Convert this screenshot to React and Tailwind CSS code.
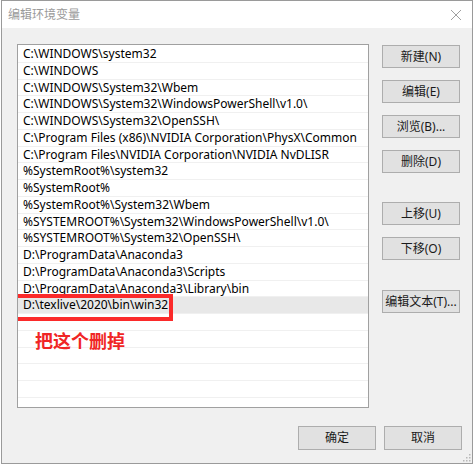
import React from "react";

const paths = [
  "C:\\WINDOWS\\system32",
  "C:\\WINDOWS",
  "C:\\WINDOWS\\System32\\Wbem",
  "C:\\WINDOWS\\System32\\WindowsPowerShell\\v1.0\\",
  "C:\\WINDOWS\\System32\\OpenSSH\\",
  "C:\\Program Files (x86)\\NVIDIA Corporation\\PhysX\\Common",
  "C:\\Program Files\\NVIDIA Corporation\\NVIDIA NvDLISR",
  "%SystemRoot%\\system32",
  "%SystemRoot%",
  "%SystemRoot%\\System32\\Wbem",
  "%SYSTEMROOT%\\System32\\WindowsPowerShell\\v1.0\\",
  "%SYSTEMROOT%\\System32\\OpenSSH\\",
  "D:\\ProgramData\\Anaconda3",
  "D:\\ProgramData\\Anaconda3\\Scripts",
  "D:\\ProgramData\\Anaconda3\\Library\\bin",
  "D:\\texlive\\2020\\bin\\win32",
  "",
  "",
  "",
  "",
  "",
];

const font = { fontFamily: "'Noto Sans', 'Noto Sans CJK SC', sans-serif" };

const Btn = ({ children, className = "" }) => (
  <button
    className={`w-[78px] h-[23px] bg-[#e1e1e1] border border-[#adadad] text-[12px] leading-none text-[#1a1a1a] ${className}`}
    style={font}
  >
    {children}
  </button>
);

export default function App() {
  return (
    <div className="w-[474px] h-[465px] bg-white pl-px" style={font}>
      <div className="w-[472px] h-[464px] border border-[#9a9a9a] bg-[#f0f0f0] flex flex-col relative">
        {/* Title bar */}
        <div className="h-[27px] bg-white flex items-center justify-between pl-[6px] pr-[8px]">
          <span className="text-[12px] text-[#9a9a9a]">编辑环境变量</span>
          <svg width="12" height="12" viewBox="0 0 12 12" className="mr-[2px]">
            <path d="M1 1 L11 11 M11 1 L1 11" stroke="#a0a0a0" strokeWidth="1" />
          </svg>
        </div>

        {/* Body */}
        <div className="flex pt-[16px] pl-[15px]">
          {/* List */}
          <div className="relative w-[352px] h-[364px] bg-white border border-[#a0a0a0] pt-px overflow-hidden">
            {paths.map((p, i) => (
              <div
                key={i}
                className={`h-[16.75px] border-b border-[#f0f0f0] pl-[5px] text-[12px] leading-[16px] text-black whitespace-nowrap ${
                  i === 15 ? "bg-[#e8e8e8]" : ""
                }`}
              >
                {p}
              </div>
            ))}
            {/* annotation */}
            <div className="absolute left-[-5px] top-[249px] w-[160px] h-[27px] border-4 border-[#fb2a2a]" />
            <div
              className="absolute left-[17px] top-[286px] text-[18px] leading-none font-bold text-[#f02525]"
              style={{ fontFamily: "'Noto Sans CJK SC', sans-serif" }}
            >
              把这个删掉
            </div>
          </div>

          {/* Side buttons */}
          <div className="flex flex-col ml-[13px] pt-px">
            <Btn>新建(N)</Btn>
            <Btn className="mt-[12px]">编辑(E)</Btn>
            <Btn className="mt-[12px]">浏览(B)...</Btn>
            <Btn className="mt-[12px]">删除(D)</Btn>
            <Btn className="mt-[29px]">上移(U)</Btn>
            <Btn className="mt-[12px]">下移(O)</Btn>
            <Btn className="mt-[30px]">编辑文本(T)...</Btn>
          </div>
        </div>

        {/* Bottom buttons */}
        <div className="flex justify-end gap-[8px] pr-[10px] mt-[18px]">
          <Btn className="h-[24px]">确定</Btn>
          <Btn className="h-[24px]">取消</Btn>
        </div>

        {/* resize grip */}
        <svg width="10" height="10" viewBox="0 0 10 10" className="absolute right-[1px] bottom-[1px]">
          {[[8, 2], [8, 5], [5, 5], [8, 8], [5, 8], [2, 8]].map(([x, y], i) => (
            <rect key={i} x={x} y={y} width="1.5" height="1.5" fill="#b8b8b8" />
          ))}
        </svg>
      </div>
    </div>
  );
}
